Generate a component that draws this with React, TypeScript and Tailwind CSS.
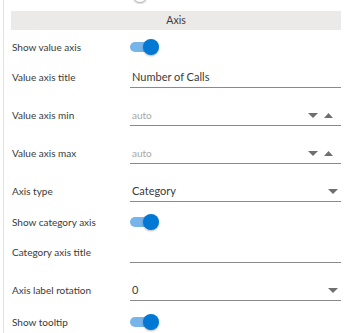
import type { ReactNode } from 'react'

function Toggle() {
  return (
    <div className="relative w-[29px] h-[16px]">
      <div className="absolute left-0 top-[3px] w-[22px] h-[10px] rounded-full bg-[#77b4ea]" />
      <div className="absolute right-0 top-0 w-[16px] h-[16px] rounded-full bg-[#0078d4] shadow-[0_1px_2px_rgba(0,0,0,0.3)]" />
    </div>
  )
}

function Down() {
  return (
    <svg width="10" height="5" viewBox="0 0 10 5">
      <path d="M0 0 L10 0 L5 5 Z" fill="#6f6f6f" />
    </svg>
  )
}

function Up() {
  return (
    <svg width="9" height="5" viewBox="0 0 9 5">
      <path d="M0 5 L9 5 L4.5 0 Z" fill="#6f6f6f" />
    </svg>
  )
}

function SwitchRow({ label, className }: { label: string; className: string }) {
  return (
    <div className={`flex items-center h-[24px] ${className}`}>
      <div className="w-[119px] pl-[1px] text-[10px]">{label}</div>
      <Toggle />
    </div>
  )
}

function FieldRow({ label, className, children }: { label: string; className: string; children?: ReactNode }) {
  return (
    <div className={`flex items-end ${className}`}>
      <div className="flex w-full h-[21px] items-center">
        <div className="w-[119px] pl-[1px] text-[10px]">{label}</div>
        <div className="flex-1 h-full flex items-center border-b border-[#8a8a8a] pl-[2px]">{children}</div>
      </div>
    </div>
  )
}

function Spin() {
  return (
    <>
      <span className="flex-1 text-[10px] text-[#a6a6a6]">auto</span>
      <div className="flex items-center gap-[6px] pr-[8px]">
        <Down />
        <Up />
      </div>
    </>
  )
}

function Select({ value }: { value: string }) {
  return (
    <>
      <span className="flex-1">{value}</span>
      <div className="pr-[3px] flex items-center">
        <Down />
      </div>
    </>
  )
}

export default function App() {
  return (
    <div className="w-[346px] h-[333px] overflow-hidden bg-white text-[11px] text-[#3a3a3a] font-['Lato','Open_Sans',sans-serif]">
      <div className="ml-[3px] h-full border-l border-[#e2e2e2] pl-[7px] pr-[5px]">
        {/* knob of the row above, scrolled off */}
        <div className="h-[4px] overflow-hidden">
          <div className="ml-[122px] -mt-[11px] w-[14px] h-[14px] rounded-full bg-white border border-[#bdbdbd] shadow-[0_1px_2px_rgba(0,0,0,0.2)]" />
        </div>
        <div className="mt-[7px] h-[19px] bg-[#ebeae9] flex items-center justify-center text-[10.5px]">Axis</div>

        <SwitchRow label="Show value axis" className="mt-[5px]" />
        <FieldRow label="Value axis title" className="h-[29px]">
          <span>Number of Calls</span>
        </FieldRow>
        <FieldRow label="Value axis min" className="h-[38px]">
          <Spin />
        </FieldRow>
        <FieldRow label="Value axis max" className="h-[38px]">
          <Spin />
        </FieldRow>
        <FieldRow label="Axis type" className="h-[38px]">
          <Select value="Category" />
        </FieldRow>
        <SwitchRow label="Show category axis" className="mt-[8px]" />
        <FieldRow label="Category axis title" className="h-[29px]" />
        <FieldRow label="Axis label rotation" className="h-[38px]">
          <Select value="0" />
        </FieldRow>
        <SwitchRow label="Show tooltip" className="mt-[9px]" />
      </div>
    </div>
  )
}
